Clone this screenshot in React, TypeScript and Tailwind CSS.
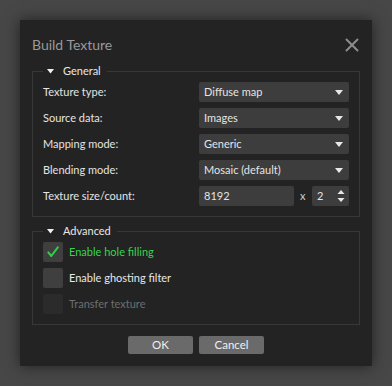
import React from "react";

const font = { fontFamily: '"Lato", "Noto Sans", sans-serif' };

function Caret() {
  return (
    <svg width="8" height="5" viewBox="0 0 8 5" className="shrink-0">
      <path d="M0 0 L8 0 L4 5 Z" fill="#e8e8e8" />
    </svg>
  );
}

function Combo({ value }: { value: string }) {
  return (
    <div className="flex h-5 w-[150px] items-center justify-between rounded-[2px] bg-[#3d3d3d] pl-[5px] pr-[6px] text-[11px] text-[#e4e4e4]">
      <span>{value}</span>
      <Caret />
    </div>
  );
}

function Row({ label, children }: { label: string; children: React.ReactNode }) {
  return (
    <div className="flex h-5 items-center justify-between">
      <span className="text-[11px] text-[#e4e4e4]">{label}</span>
      {children}
    </div>
  );
}

function Legend({ title }: { title: string }) {
  return (
    <div className="absolute left-[10px] top-[-9px] flex h-[17px] items-center gap-[9px] bg-[#232323] pl-[4px] pr-[6px]">
      <svg width="7" height="5" viewBox="0 0 7 5">
        <path d="M0 0 L7 0 L3.5 4.5 Z" fill="#f0f0f0" />
      </svg>
      <span className="text-[11px] text-[#e8e8e8]">{title}</span>
    </div>
  );
}

function Check({ state, label }: { state: "on" | "off" | "disabled"; label: string }) {
  const box = state === "disabled" ? "bg-[#2b2b2b]" : "bg-[#3f3f3f]";
  const text =
    state === "on" ? "text-[#3ad24e]" : state === "off" ? "text-[#e8e8e8]" : "text-[#6e6e6e]";
  return (
    <div className="flex h-5 items-center gap-[6px]">
      <div className={`flex h-5 w-5 items-center justify-center rounded-[2px] ${box}`}>
        {state === "on" && (
          <svg width="12" height="12" viewBox="0 0 12 12">
            <path d="M1.3 6.4 L4.3 10 L10.8 1.3" fill="none" stroke="#2fd048" strokeWidth="2" strokeLinecap="round" strokeLinejoin="round" />
          </svg>
        )}
      </div>
      <span className={`text-[11px] ${text}`}>{label}</span>
    </div>
  );
}

export default function App() {
  return (
    <div className="h-[386px] w-[392px] bg-[#474747] pl-5 pt-5" style={font}>
      <div className="flex h-[346px] w-[352px] flex-col bg-[#232323] px-3 shadow-[0_0_14px_rgba(0,0,0,0.55)]">
        <div className="flex h-[46px] items-center justify-between pt-[3px]">
          <span className="text-[14px] text-[#9a9a9a]">Build Texture</span>
          <svg width="14" height="14" viewBox="0 0 14 14" className="mr-[1px]">
            <path d="M1.5 1.5 L12.5 12.5 M12.5 1.5 L1.5 12.5" stroke="#8c8c8c" strokeWidth="2" strokeLinecap="round" />
          </svg>
        </div>

        <div className="relative mt-[5px] flex flex-col gap-[6px] border border-[#383838] px-[10px] pb-[10px] pt-[10px]">
          <Legend title="General" />
          <Row label="Texture type:">
            <Combo value="Diffuse map" />
          </Row>
          <Row label="Source data:">
            <Combo value="Images" />
          </Row>
          <Row label="Mapping mode:">
            <Combo value="Generic" />
          </Row>
          <Row label="Blending mode:">
            <Combo value="Mosaic (default)" />
          </Row>
          <Row label="Texture size/count:">
            <div className="flex w-[150px] items-center">
              <div className="flex h-5 w-[95px] items-center rounded-[2px] bg-[#3d3d3d] pl-[5px] text-[11px] text-[#e4e4e4]">
                8192
              </div>
              <span className="ml-[6px] w-[12px] text-[11px] text-[#d0d0d0]">x</span>
              <div className="flex h-5 w-[37px] items-center justify-between rounded-[2px] bg-[#3d3d3d] pl-[5px] pr-[4px] text-[11px] text-[#e4e4e4]">
                <span>2</span>
                <svg width="8" height="14" viewBox="0 0 8 14">
                  <path d="M0.5 5 L7.5 5 L4 1 Z" fill="#e8e8e8" />
                  <path d="M0.5 9 L7.5 9 L4 13 Z" fill="#e8e8e8" />
                </svg>
              </div>
            </div>
          </Row>
        </div>

        <div className="relative mt-[14px] flex flex-col gap-[6px] border border-[#383838] px-[10px] pb-[10px] pt-[10px]">
          <Legend title="Advanced" />
          <Check state="on" label="Enable hole filling" />
          <Check state="off" label="Enable ghosting filter" />
          <Check state="disabled" label="Transfer texture" />
        </div>

        <div className="mt-[11px] flex justify-center gap-[6px]">
          <button className="h-[18px] w-[65px] rounded-[2px] bg-[#6a6a6a] text-[11.5px] leading-none text-[#f0f0f0]">
            OK
          </button>
          <button className="h-[18px] w-[65px] rounded-[2px] bg-[#6a6a6a] text-[11.5px] leading-none text-[#f0f0f0]">
            Cancel
          </button>
        </div>
      </div>
    </div>
  );
}
